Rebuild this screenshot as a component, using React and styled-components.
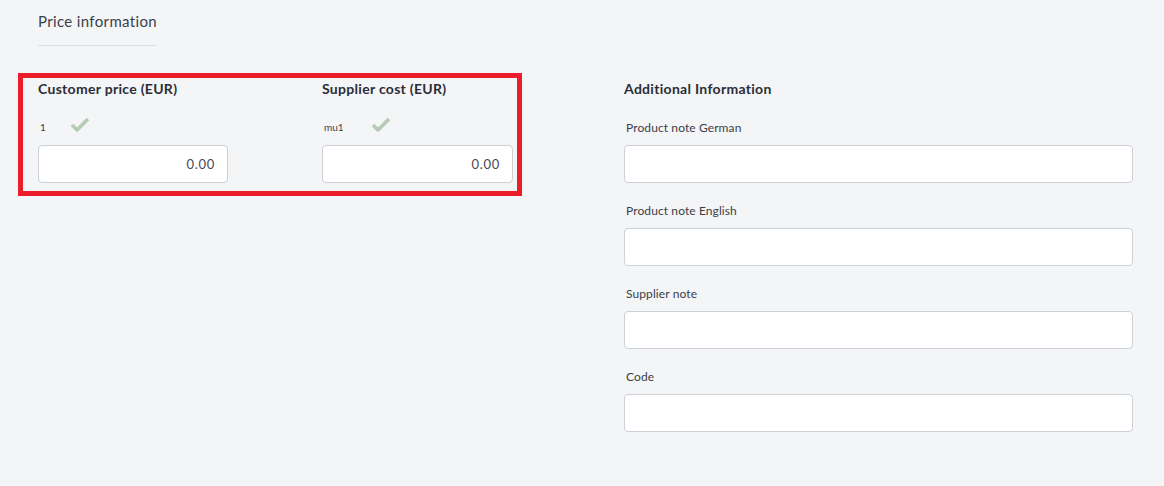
import React from "react";
import styled, { createGlobalStyle } from "styled-components";

const GlobalStyle = createGlobalStyle`
  body {
    margin: 0;
    background: #f4f5f7;
    font-family: Lato, "Liberation Sans", sans-serif;
    color: #2f333c;
  }
`;

const Page = styled.div`
  padding: 11px 31px 0 18px;
`;

const SectionTitle = styled.div`
  display: inline-block;
  margin-left: 20px;
  padding-bottom: 14px;
  font-size: 15px;
  line-height: 20px;
  letter-spacing: 0.35px;
  color: #3a3f4b;
  border-bottom: 1px solid #dcdfe4;
`;

const Content = styled.div`
  display: flex;
  justify-content: space-between;
  align-items: flex-start;
  margin-top: 27px;
`;

const PriceBox = styled.div`
  box-sizing: border-box;
  width: 504px;
  border: 5px solid #ec1c2a;
  padding: 2px 4px 8px 15px;
  display: flex;
  justify-content: space-between;
`;

const PriceField = styled.div`
  width: ${(p) => p.width}px;
  display: flex;
  flex-direction: column;
`;

const Heading = styled.div`
  font-size: 14px;
  font-weight: 700;
  line-height: 18px;
  color: #2b2e36;
  letter-spacing: 0.3px;
`;

const MetaRow = styled.div`
  display: flex;
  align-items: center;
  height: 20px;
  margin: 17px 0 10px;
  padding-left: 2px;
`;

const MetaText = styled.span`
  font-size: 10px;
  line-height: 10px;
  padding-top: 3px;
  color: #3d414b;
  width: ${(p) => p.width}px;
`;

const Input = styled.div`
  box-sizing: border-box;
  height: 38px;
  width: 100%;
  background: #fff;
  border: 1px solid #ccd1d8;
  border-radius: 4px;
  display: flex;
  align-items: center;
  justify-content: flex-end;
  padding-right: 12px;
  font-size: 13px;
  color: #464a57;
  letter-spacing: 0.7px;
`;

const InfoColumn = styled.div`
  width: 509px;
  padding-top: 7px;
  display: flex;
  flex-direction: column;
`;

const FieldGroup = styled.div`
  margin-top: ${(p) => p.top}px;
`;

const Label = styled.div`
  font-size: 12px;
  line-height: 16px;
  letter-spacing: 0.1px;
  color: #3a3e48;
  padding-left: 2px;
  margin-bottom: 9px;
`;

const Check = () => (
  <svg width="20" height="16" viewBox="0 0 20 16">
    <polyline
      points="2,8 7,13 18,2"
      fill="none"
      stroke="#b6cab5"
      strokeWidth="3.6"
      strokeLinejoin="round"
    />
  </svg>
);

const notes = ["Product note German", "Product note English", "Supplier note", "Code"];

export default function App() {
  return (
    <>
      <GlobalStyle />
      <Page>
        <SectionTitle>Price information</SectionTitle>
        <Content>
          <PriceBox>
            <PriceField width={190}>
              <Heading>Customer price (EUR)</Heading>
              <MetaRow>
                <MetaText width={30}>1</MetaText>
                <Check />
              </MetaRow>
              <Input>0.00</Input>
            </PriceField>
            <PriceField width={191}>
              <Heading>Supplier cost (EUR)</Heading>
              <MetaRow>
                <MetaText width={47}>mu1</MetaText>
                <Check />
              </MetaRow>
              <Input>0.00</Input>
            </PriceField>
          </PriceBox>
          <InfoColumn>
            <Heading>Additional Information</Heading>
            {notes.map((n, i) => (
              <FieldGroup key={n} top={i === 0 ? 22 : 20}>
                <Label>{n}</Label>
                <Input />
              </FieldGroup>
            ))}
          </InfoColumn>
        </Content>
      </Page>
    </>
  );
}
